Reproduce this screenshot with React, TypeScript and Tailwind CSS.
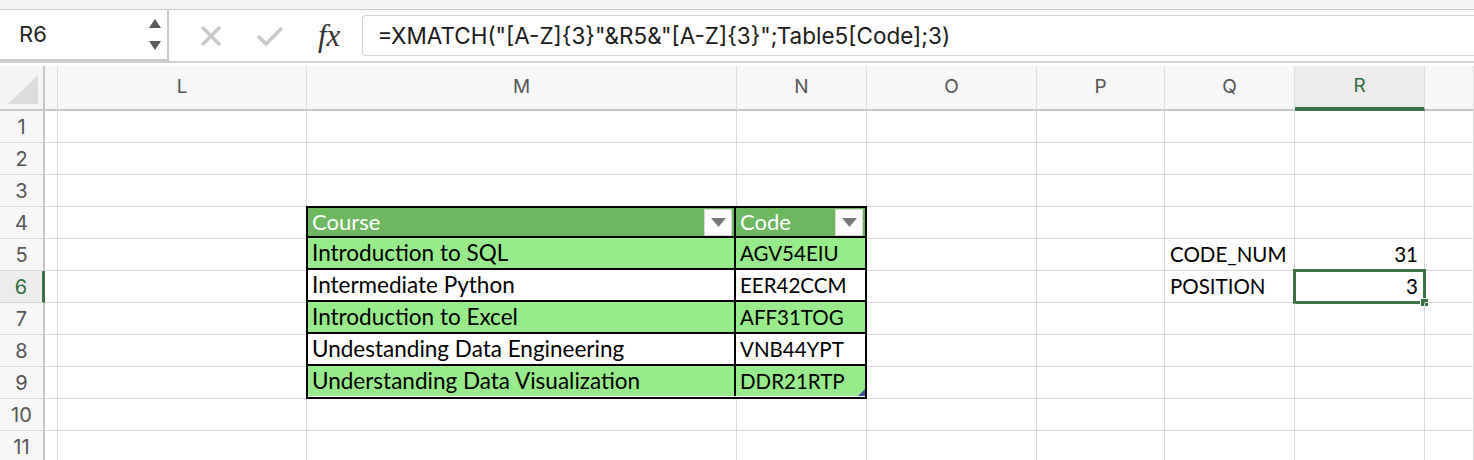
import React from "react";

const cols = ["K", "L", "M", "N", "O", "P", "Q", "R", "S"];

const courses = [
  { name: "Introduction to SQL", code: "AGV54EIU", green: true },
  { name: "Intermediate Python", code: "EER42CCM", green: false },
  { name: "Introduction to Excel", code: "AFF31TOG", green: true },
  { name: "Undestanding Data Engineering", code: "VNB44YPT", green: false },
  { name: "Understanding Data Visualization", code: "DDR21RTP", green: true },
];

const ui = { fontFamily: "Inter, 'Liberation Sans', sans-serif" };
const cell = { fontFamily: "Lato, 'Open Sans', sans-serif" };

function FilterButton() {
  return (
    <div className="w-[28px] h-[27px] bg-white border border-[#d8d8d8] flex items-center justify-center">
      <svg width="15" height="9" viewBox="0 0 15 9">
        <path d="M0 0 H15 L7.5 9 Z" fill="#7b7b7b" />
      </svg>
    </div>
  );
}

function CourseTable() {
  return (
    <div
      className="col-span-2 row-span-6 -ml-px -mt-px relative z-10 border-2 border-black grid grid-cols-[428px_1fr] grid-rows-[30px_32px_32px_32px_32px_30px] text-black leading-none"
      style={cell}
    >
      <div className="bg-[#6bb85f] border-r-2 border-b-2 border-black flex items-center justify-between pl-[4px] pr-[2px]">
        <span className="text-white text-[22px]">Course</span>
        <FilterButton />
      </div>
      <div className="bg-[#6bb85f] border-b-2 border-black flex items-center justify-between pl-[4px] pr-[2px]">
        <span className="text-white text-[22px]">Code</span>
        <FilterButton />
      </div>
      {courses.map((c, i) => {
        const bg = c.green ? "bg-[#97eb8b]" : "bg-white";
        const last = i === courses.length - 1;
        return (
          <React.Fragment key={c.code}>
            <div className={`${bg} border-r-2 border-black ${last ? "" : "border-b-2"} flex items-center pl-[4px] text-[22.5px]`}>
              {c.name}
            </div>
            <div className={`${bg} border-black ${last ? "" : "border-b-2"} flex items-center pl-[4px] text-[20.5px] relative`}>
              {c.code}
              {last && (
                <svg className="absolute right-0 bottom-0" width="7" height="7" viewBox="0 0 7 7">
                  <path d="M7 0 V7 H0 Z" fill="#3d4f9a" />
                </svg>
              )}
            </div>
          </React.Fragment>
        );
      })}
    </div>
  );
}

export default function App() {
  const rows = Array.from({ length: 11 }, (_, i) => i + 1);

  return (
    <div className="w-[1474px] h-[460px] overflow-hidden bg-white">
      {/* toolbar */}
      <div className="h-[10px] bg-[#f4f4f4] border-b border-[#d0d0d0]" />
      <div className="h-[53px] flex items-stretch bg-white border-b-2 border-[#cfcfcf]" style={ui}>
        <div className="w-[169px] border-2 border-t-0 border-l-0 border-[#c9c9c9] flex items-center justify-between pl-[19px] pr-[4px]">
          <span className="text-[22px] text-[#222]">R6</span>
          <svg width="16" height="36" viewBox="0 0 16 36">
            <path d="M2 11 L8 2 L14 11 Z" fill="#5a5a5a" />
            <path d="M2 24 L14 24 L8 33 Z" fill="#5a5a5a" />
          </svg>
        </div>
        <div className="flex items-center pl-[30px] gap-[33px]">
          <svg width="24" height="24" viewBox="0 0 24 24">
            <path d="M3 3 L21 21 M21 3 L3 21" stroke="#c9c9c9" strokeWidth="3.4" />
          </svg>
          <svg width="28" height="22" viewBox="0 0 28 22">
            <path d="M2 11 L10 19 L26 3" stroke="#c9c9c9" strokeWidth="3.4" fill="none" />
          </svg>
          <span
            className="text-[31px] italic text-[#333] ml-[1px] leading-none"
            style={{ fontFamily: "'Liberation Serif', serif" }}
          >
            fx
          </span>
        </div>
        <div className="flex-1 flex items-center ml-[22px]">
          <div className="h-[41px] w-full border border-r-0 border-[#d2d2d2] rounded-l-[4px] flex items-center pl-[14px] text-[22.5px] text-[#1a1a1a]">
            =XMATCH("[A-Z]{"{"}3{"}"}"&amp;R5&amp;"[A-Z]{"{"}3{"}"}";Table5[Code];3)
          </div>
        </div>
      </div>

      {/* sheet grid */}
      <div className="grid grid-cols-[45px_13px_249px_430px_130px_170px_128px_130px_130px_1fr] grid-rows-[45px_repeat(11,32px)] mt-[3px]">
        {/* header row */}
        <div className="bg-[#f5f5f5] border-r-2 border-b-2 border-[#c6c6c6] flex items-end justify-end p-[5px]">
          <svg width="30" height="29" viewBox="0 0 30 29">
            <path d="M30 0 V29 H0 Z" fill="#dcdcdc" />
          </svg>
        </div>
        {cols.map((c) => {
          const sel = c === "R";
          return (
            <div
              key={c}
              className={`${sel ? "bg-[#ececec] text-[#2f6e3e] border-b-[4px] border-b-[#3a7246]" : "bg-[#f7f7f7] text-[#555] border-b-2 border-b-[#c6c6c6]"} border-r border-r-[#dedede] flex items-center justify-center text-[19px]`}
              style={ui}
            >
              {c === "K" || c === "S" ? "" : c}
            </div>
          );
        })}

        {rows.map((r) => (
          <React.Fragment key={r}>
            <div
              className={`${r === 6 ? "bg-[#ececec] text-[#2f6e3e] border-r-[3px] border-r-[#3a7246]" : "bg-[#f7f7f7] text-[#555] border-r-2 border-r-[#c6c6c6]"} border-b border-b-[#d8d8d8] flex items-center justify-center text-[20px]`}
              style={ui}
            >
              {r}
            </div>
            {cols.map((c) => {
              if ((c === "M" || c === "N") && r >= 4 && r <= 9) {
                return c === "M" && r === 4 ? <CourseTable key={c} /> : null;
              }
              const isSel = c === "R" && r === 6;
              let content: React.ReactNode = null;
              let align = "justify-start pl-[5px]";
              if (c === "Q" && r === 5) content = "CODE_NUM";
              if (c === "Q" && r === 6) content = "POSITION";
              if (c === "R" && r === 5) {
                content = "31";
                align = "justify-end pr-[6px]";
              }
              if (isSel) {
                content = "3";
                align = "justify-end pr-[6px]";
              }
              return (
                <div
                  key={c}
                  className={`border-r border-b border-[#d8d8d8] flex items-center ${align} text-[20.5px] text-black relative leading-none`}
                  style={cell}
                >
                  {content}
                  {isSel && (
                    <>
                      <div className="absolute -left-[2px] -top-[2px] -right-[2px] -bottom-[2px] border-[3px] border-[#3a7246] pointer-events-none" />
                      <div className="absolute -right-[5px] -bottom-[5px] w-[9px] h-[9px] bg-[#3a7246] border border-white" />
                    </>
                  )}
                </div>
              );
            })}
          </React.Fragment>
        ))}
      </div>
    </div>
  );
}
